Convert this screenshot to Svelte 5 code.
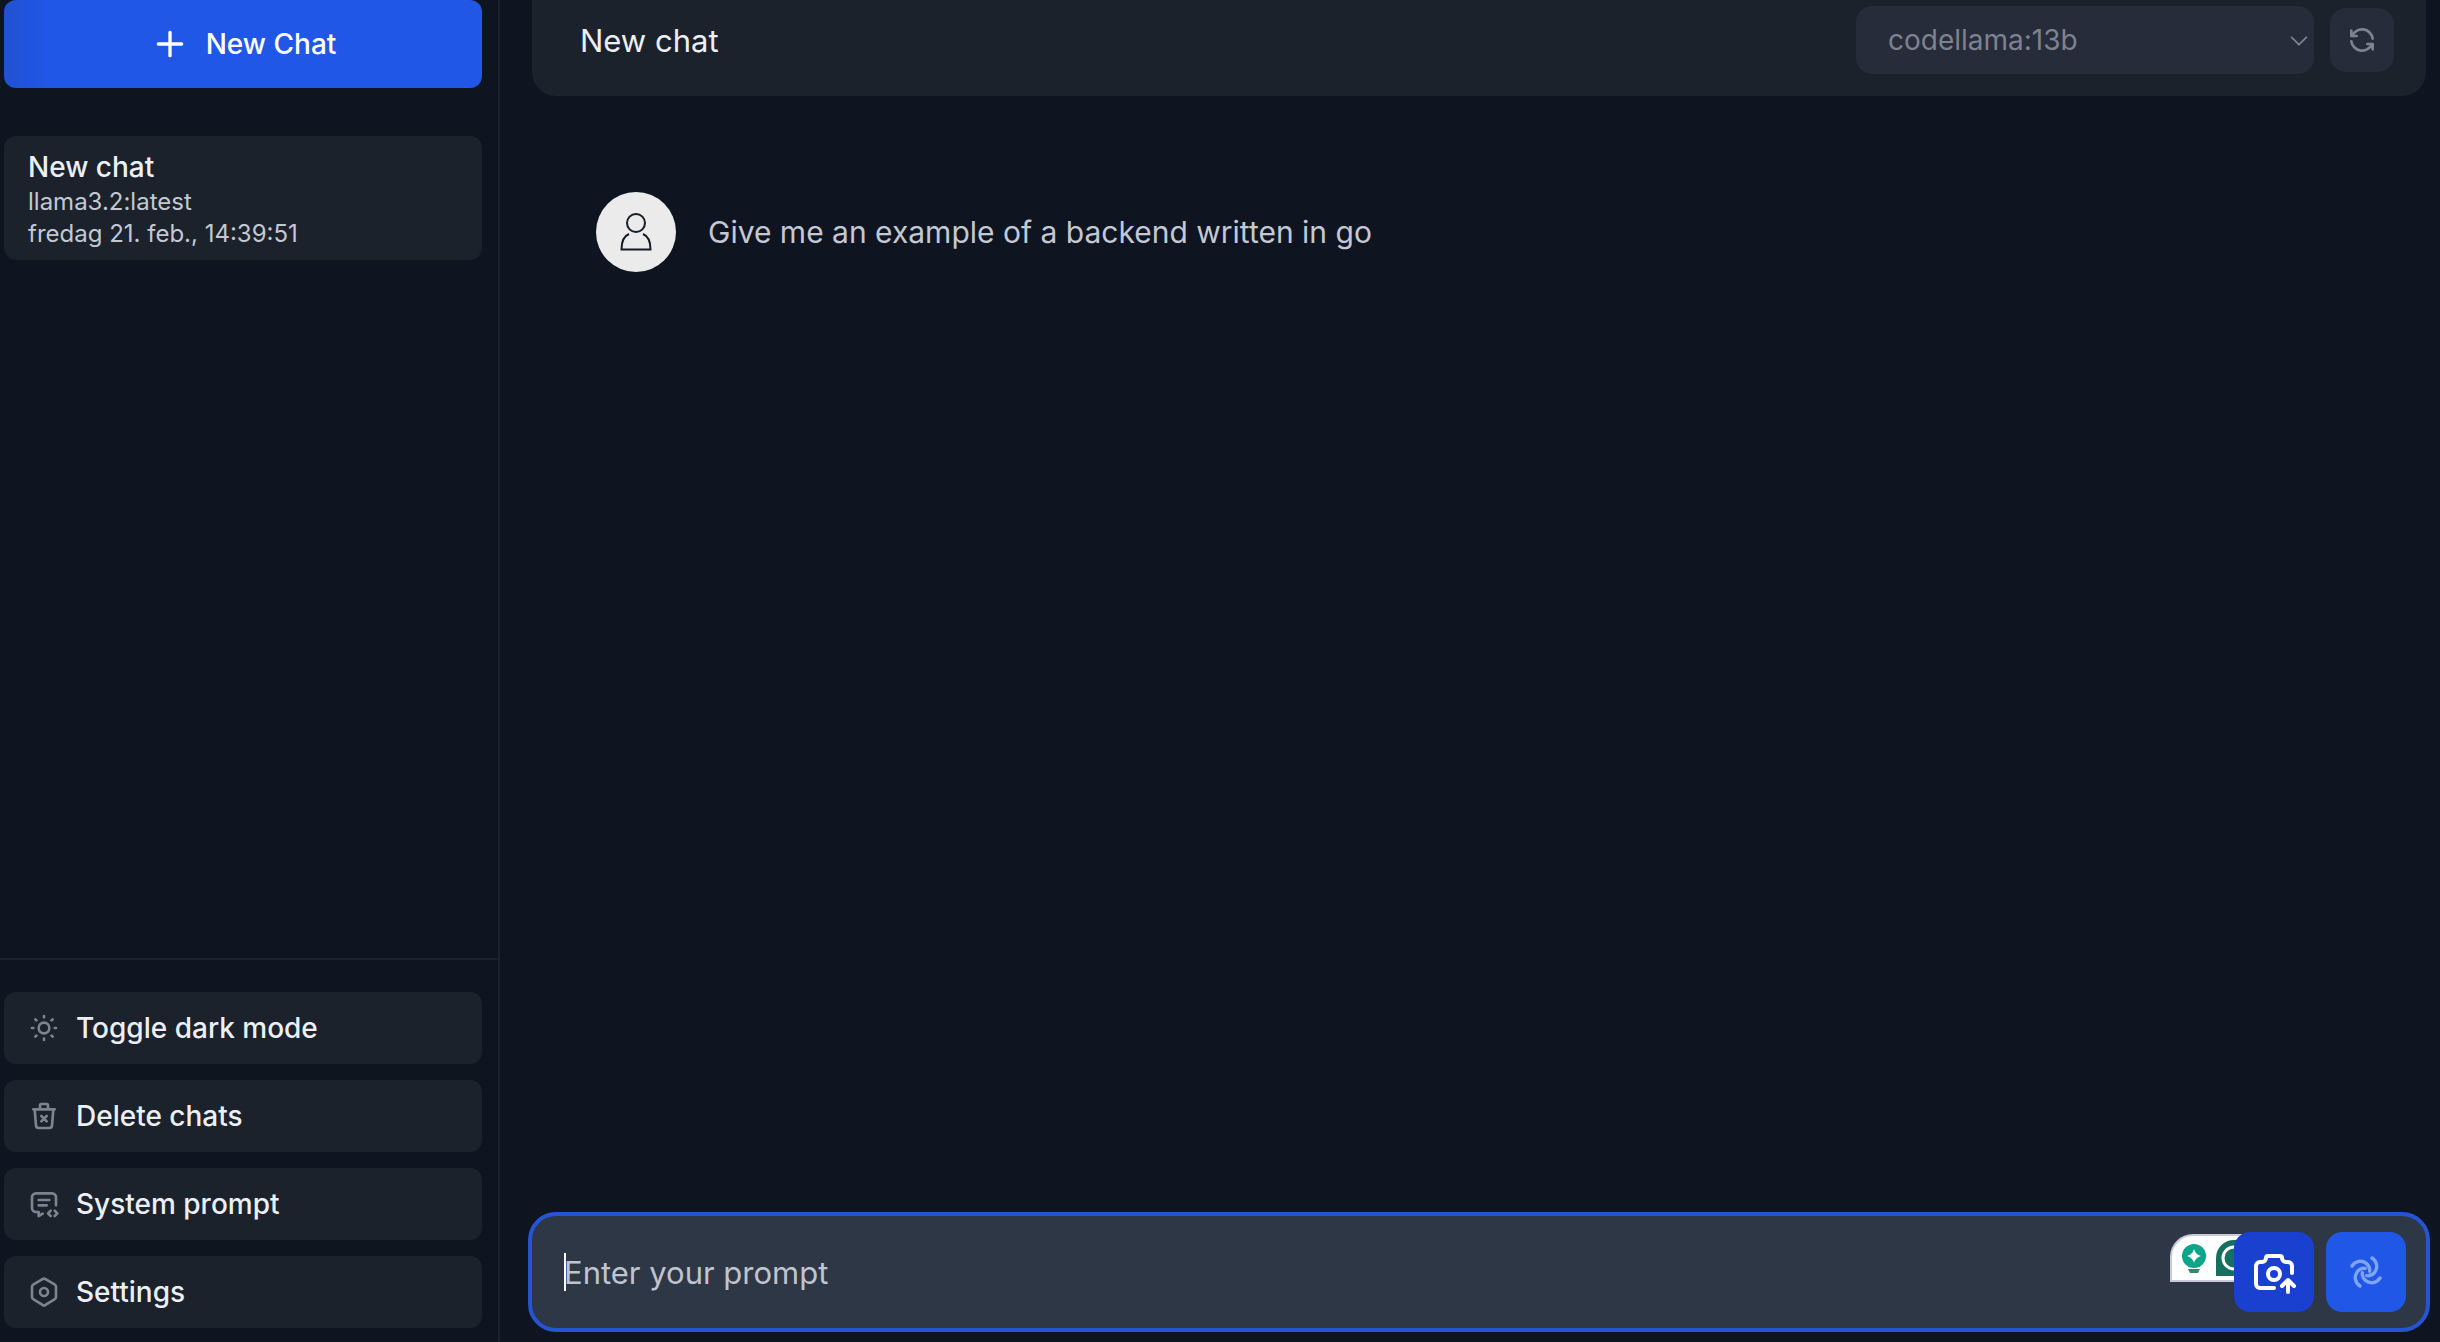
<script lang="ts">
  const models = ["codellama:13b", "llama3.2:latest"];

  let selectedModel = $state(models[0]);
  let prompt = $state("");

  const chats = [
    { name: "New chat", model: "llama3.2:latest", date: "fredag 21. feb., 14:39:51" },
  ];

  const messages = [{ content: "Give me an example of a backend written in go" }];

  // Stroke icons on a 24x24 grid
  const menu = [
    {
      label: "Toggle dark mode",
      icon: "M12 12m-4 0a4 4 0 1 0 8 0a4 4 0 1 0 -8 0M3 12h1m8 -9v1m8 8h1m-9 8v1m-6.4 -15.4l.7 .7m12.1 -.7l-.7 .7m0 11.4l.7 .7m-12.1 -.7l-.7 .7",
    },
    {
      label: "Delete chats",
      icon: "M4 7h16M5 7l1 12a2 2 0 0 0 2 2h8a2 2 0 0 0 2 -2l1 -12M9 7v-3a1 1 0 0 1 1 -1h4a1 1 0 0 1 1 1v3M10 12l4 4m0 -4l-4 4",
    },
    {
      label: "System prompt",
      icon: "M8 9h8M8 13h6M11.012 19.193l-3.012 1.807v-3h-2a3 3 0 0 1 -3 -3v-8a3 3 0 0 1 3 -3h12a3 3 0 0 1 3 3v6M20 21l2 -2l-2 -2M17 17l-2 2l2 2",
    },
    {
      label: "Settings",
      icon: "M19.875 6.27a2.225 2.225 0 0 1 1.125 1.948v7.284c0 .809 -.443 1.555 -1.158 1.948l-6.75 4.27a2.269 2.269 0 0 1 -2.184 0l-6.75 -4.27a2.225 2.225 0 0 1 -1.158 -1.948v-7.285c0 -.809 .443 -1.554 1.158 -1.947l6.75 -3.98a2.33 2.33 0 0 1 2.25 0l6.75 3.98h-.033zM12 12m-3 0a3 3 0 1 0 6 0a3 3 0 1 0 -6 0",
    },
  ];

  const icons = {
    plus: "M12 5v14M5 12h14",
    chevron: "M4 8l8 8l8 -8",
    refresh:
      "M20 11a8.1 8.1 0 0 0 -15.5 -2m-.5 -4v4h4M4 13a8.1 8.1 0 0 0 15.5 2m.5 4v-4h-4",
    camera:
      "M12 20h-7a2 2 0 0 1 -2 -2v-9a2 2 0 0 1 2 -2h1a2 2 0 0 0 2 -2a1 1 0 0 1 1 -1h6a1 1 0 0 1 1 1a2 2 0 0 0 2 2h1a2 2 0 0 1 2 2v3.5M12 16a3 3 0 1 0 0 -6a3 3 0 0 0 0 6M19 22v-6M22 19l-3 -3l-3 3",
    whirl:
      "M3.6 8.4c2 -3.2 6 -3.6 8.6 -1.6c1.6 1.3 2.2 3 2 4.800M15.600 3.600c3.2 2 3.6 6 1.6 8.6c-1.3 1.6 -3 2.2 -4.8 2M20.4 15.6c-2 3.2 -6 3.6 -8.6 1.6c-1.6 -1.3 -2.2 -3 -2 -4.8M8.4 20.4c-3.2 -2 -3.6 -6 -1.6 -8.6c1.3 -1.6 3 -2.2 4.8 -2",
  };

  function focusOnMount(node: HTMLInputElement) {
    node.focus();
  }
</script>

{#snippet icon(path: string, kind: string)}
  <svg class="icon {kind}" viewBox="0 0 24 24" aria-hidden="true">
    <path d={path} />
  </svg>
{/snippet}

<div class="app">
  <aside class="sidebar">
    <div class="chats">
      <button class="new-chat" type="button">
        {@render icon(icons.plus, "large")}
        New Chat
      </button>

      {#each chats as chat}
        <button class="chat" type="button">
          <span class="chat-name">{chat.name}</span>
          <span class="chat-meta">{chat.model}</span>
          <span class="chat-meta">{chat.date}</span>
        </button>
      {/each}
    </div>

    <nav class="menu">
      {#each menu as item}
        <button class="menu-item" type="button">
          {@render icon(item.icon, "muted")}
          {item.label}
        </button>
      {/each}
    </nav>
  </aside>

  <main class="main">
    <header class="header">
      <h1>New chat</h1>
      <div class="model">
        <select aria-label="Model" bind:value={selectedModel} disabled>
          {#each models as model}
            <option value={model}>{model}</option>
          {/each}
        </select>
        {@render icon(icons.chevron, "chevron")}
      </div>
      <button class="refresh" type="button" aria-label="Refresh models" disabled>
        {@render icon(icons.refresh, "muted")}
      </button>
    </header>

    <section class="messages">
      {#each messages as message}
        <article class="message">
          <div class="avatar">
            <svg viewBox="0 0 80 80" aria-hidden="true">
              <circle cx="40" cy="31" r="9" />
              <path d="M33 42C28 44 25.500 49 25.500 57.500H54.500C54.500 49 52 44 47 42" />
            </svg>
          </div>
          <p>{message.content}</p>
        </article>
      {/each}
    </section>

    <form class="prompt" onsubmit={(e) => e.preventDefault()}>
      <input
        type="text"
        aria-label="Prompt"
        placeholder="Enter your prompt"
        bind:value={prompt}
        use:focusOnMount
      />
      <span class="caret"></span>
      <div class="assistant">
        <svg viewBox="0 0 72 48" aria-hidden="true">
          <path class="panel" d="M1 47V23A22 22 0 0 1 23 1H72V47Z" />
          <circle class="bulb" cx="24" cy="22" r="12" />
          <path class="bulb" d="M18 29H30V33H18Z" />
          <path class="bulb-base" d="M18 35H30L28 39H20Z" />
          <path class="spark" d="M24 15Q25.500 20.500 31 22Q25.500 23.500 24 29Q22.500 23.500 17 22Q22.500 20.500 24 15Z" />
          <path class="badge" d="M46 42V24A18 18 0 0 1 64 6H72V42Z" />
          <circle class="ring" cx="64" cy="24" r="11" />
        </svg>
      </div>
      <button class="action upload" type="button" aria-label="Upload image">
        {@render icon(icons.camera, "xlarge")}
      </button>
      <button class="action send" type="submit" aria-label="Send" disabled>
        {@render icon(icons.whirl, "large")}
      </button>
    </form>
  </main>
</div>

<style>
  :global(body) {
    margin: 0;
    background: #0f1520;
  }

  .app {
    display: flex;
    height: 100vh;
    overflow: hidden;
    font-family: Inter, "Liberation Sans", sans-serif;
    color: #eceff5;
  }

  button,
  input,
  select {
    font: inherit;
    color: inherit;
    border: none;
    margin: 0;
  }

  .icon {
    flex: none;
    width: 32px;
    height: 32px;
    fill: none;
    stroke: currentColor;
    stroke-width: 2;
    stroke-linecap: round;
    stroke-linejoin: round;
  }

  .large {
    width: 40px;
    height: 40px;
  }

  .xlarge {
    width: 48px;
    height: 48px;
  }

  .muted {
    color: #7d838f;
  }

  /* Sidebar */
  .sidebar {
    display: flex;
    flex-direction: column;
    flex: none;
    width: 498px;
    border-right: 2px solid #1b222c;
  }

  .chats {
    display: flex;
    flex: 1;
    flex-direction: column;
    padding: 0 16px 0 4px;
  }

  .new-chat {
    display: flex;
    align-items: center;
    justify-content: center;
    gap: 16px;
    height: 88px;
    margin-bottom: 48px;
    border-radius: 12px;
    background: linear-gradient(90deg, #2151d4, #2057e7 48px);
    color: #ffffff;
    font-size: 28px;
    font-weight: 500;
  }

  .chat {
    display: flex;
    flex-direction: column;
    padding: 12px 24px 10px;
    border-radius: 12px;
    background: #1b222c;
    text-align: left;
  }

  .chat-name {
    font-size: 28px;
    font-weight: 500;
    line-height: 38px;
  }

  .chat-meta {
    color: #c3c8d3;
    font-size: 24px;
    line-height: 32px;
  }

  .menu {
    display: flex;
    flex-direction: column;
    gap: 16px;
    padding: 32px 16px 14px 4px;
    border-top: 2px solid #1b222c;
  }

  .menu-item {
    display: flex;
    align-items: center;
    gap: 16px;
    height: 72px;
    padding: 0 24px;
    border-radius: 12px;
    background: #1b222c;
    font-size: 28px;
    font-weight: 500;
  }

  /* Conversation */
  .main {
    display: flex;
    flex: 1;
    flex-direction: column;
    min-width: 0;
  }

  .header {
    display: flex;
    align-items: center;
    gap: 16px;
    margin: 0 14px 0 32px;
    padding: 6px 32px 22px 48px;
    border-radius: 0 0 24px 24px;
    background: #1b222c;
  }

  h1 {
    flex: 1;
    margin: 0;
    font-size: 31px;
    font-weight: 400;
  }

  .model {
    position: relative;
    width: 458px;
    height: 68px;
    color: #7d828f;
  }

  select {
    width: 100%;
    height: 100%;
    padding: 0 32px;
    border-radius: 16px;
    appearance: none;
    background: #272c3a;
    font-size: 28px;
    opacity: 1;
  }

  .chevron {
    position: absolute;
    top: 24px;
    right: 4px;
    width: 22px;
    height: 22px;
    pointer-events: none;
  }

  .refresh {
    display: grid;
    place-items: center;
    width: 64px;
    height: 64px;
    padding: 0;
    border-radius: 16px;
    background: #272c3a;
  }

  .messages {
    flex: 1;
    padding: 96px 96px 0;
  }

  .message {
    display: flex;
    align-items: center;
    gap: 32px;
  }

  .message p {
    margin: 0;
    color: #c3c8d3;
    font-size: 30px;
  }

  .avatar {
    width: 80px;
    height: 80px;
    border-radius: 50%;
    background: #ebebeb;
  }

  .avatar svg {
    display: block;
    fill: none;
    stroke: #141c28;
    stroke-width: 2;
  }

  /* Prompt bar */
  .prompt {
    position: relative;
    display: flex;
    align-items: center;
    gap: 12px;
    margin: 0 10px 10px 28px;
    padding: 16px 20px 16px 32px;
    border: 4px solid #2456d3;
    border-radius: 28px;
    background: #2e3745;
  }

  input {
    flex: 1;
    min-width: 0;
    height: 80px;
    padding: 0;
    background: none;
    caret-color: transparent;
    font-size: 31px;
    outline: none;
  }

  input::placeholder {
    color: #bfc4ce;
    opacity: 1;
  }

  .caret {
    position: absolute;
    top: 37px;
    left: 32px;
    width: 2px;
    height: 38px;
    background: #ffffff;
  }

  .assistant {
    position: absolute;
    top: 18px;
    right: 184px;
    width: 72px;
    height: 48px;
  }

  .panel {
    fill: #ffffff;
    stroke: #c9c9d8;
    stroke-width: 2;
  }

  .bulb {
    fill: #0ba587;
  }

  .bulb-base {
    fill: #35866f;
  }

  .spark {
    fill: #ffffff;
  }

  .badge {
    fill: #16705f;
  }

  .ring {
    fill: none;
    stroke: #ffffff;
    stroke-width: 3;
  }

  .action {
    position: relative;
    display: grid;
    place-items: center;
    width: 80px;
    height: 80px;
    padding: 0;
    border-radius: 16px;
  }

  .upload {
    background: #1a40d0;
    color: #ffffff;
  }

  .send {
    background: #2057e7;
    color: #7fa3f5;
  }
</style>
